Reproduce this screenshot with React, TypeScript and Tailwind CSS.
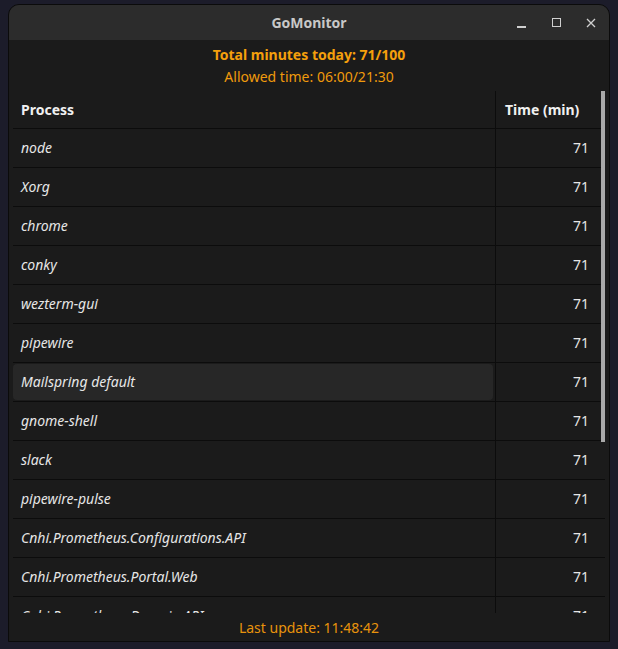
import React from "react";

const rows = [
  "node",
  "Xorg",
  "chrome",
  "conky",
  "wezterm-gui",
  "pipewire",
  "Mailspring default",
  "gnome-shell",
  "slack",
  "pipewire-pulse",
  "Cnhi.Prometheus.Configurations.API",
  "Cnhi.Prometheus.Portal.Web",
  "Cnhi.Prometheus.Domain.API",
];

export default function App() {
  return (
    <div
      className="w-[618px] h-[649px] bg-[#1c1c2a] pt-[4px] pl-[8px] overflow-hidden"
      style={{ fontFamily: '"Noto Sans", "Open Sans", sans-serif' }}
    >
      <div className="w-[602px] h-[638px] flex flex-col border border-[#0b0b0b] rounded-t-[11px] overflow-hidden bg-[#1b1b1b]">
        {/* Title bar */}
        <div className="h-[35px] shrink-0 bg-[#2c2c2c] relative flex items-center justify-center">
          <span className="text-[14px] font-bold text-[#c8c8c8] leading-none">GoMonitor</span>
          <div className="absolute right-0 top-0 h-full flex items-center">
            <div className="w-[36px] flex justify-center">
              <div className="w-[9px] h-[1.5px] bg-[#d0d0d0] mt-[9px]" />
            </div>
            <div className="w-[34px] flex justify-center">
              <div className="w-[9px] h-[9px] border border-[#d0d0d0]" />
            </div>
            <div className="w-[36px] flex justify-center">
              <svg width="10" height="10" viewBox="0 0 10 10">
                <path d="M1 1 L9 9 M9 1 L1 9" stroke="#d0d0d0" strokeWidth="1.3" fill="none" />
              </svg>
            </div>
          </div>
        </div>

        {/* Body */}
        <div className="flex-1 flex flex-col px-[4px] min-h-0">
          <div className="pt-[5px] flex flex-col items-center">
            <div className="text-[14px] leading-[20px] font-bold text-[#f5a00c]">Total minutes today: 71/100</div>
            <div className="text-[14px] leading-[23px] text-[#f09a0c]">Allowed time: 06:00/21:30</div>
          </div>
          <div className="mt-[3px] relative h-[522px] overflow-hidden shrink-0">
            <div className="grid grid-cols-[483px_1fr] text-[14px] text-[#e6e6e6]">
              <div className="h-[38px] border-b border-r border-[#0c0c0c] flex items-center pb-[1px] pl-[8px] font-bold text-[#f0f0f0]">
                Process
              </div>
              <div className="h-[38px] border-b border-[#0c0c0c] flex items-center pb-[1px] pl-[9px] font-bold text-[#f0f0f0]">
                Time (min)
              </div>
              {rows.map((name) => {
                const sel = name === "Mailspring default";
                return (
                  <React.Fragment key={name}>
                    <div className="h-[39px] border-b border-r border-[#0c0c0c] flex items-stretch">
                      <div
                        className={
                          "flex-1 flex items-center pl-[8px] pb-[1px] italic my-[1px] mr-[2px] rounded-[4px] " +
                          (sel ? "bg-[#272727]" : "")
                        }
                      >
                        {name}
                      </div>
                    </div>
                    <div className="h-[39px] border-b border-[#0c0c0c] flex items-center justify-end pb-[1px] pr-[16px]">
                      71
                    </div>
                  </React.Fragment>
                );
              })}
            </div>
            <div className="absolute right-0 top-0 w-[4px] h-[351px] bg-[#a9a9a9]" />
          </div>
          <div className="flex-1 flex items-center justify-center text-[14px] text-[#e8930c]">
            Last update: 11:48:42
          </div>
        </div>
      </div>
    </div>
  );
}
